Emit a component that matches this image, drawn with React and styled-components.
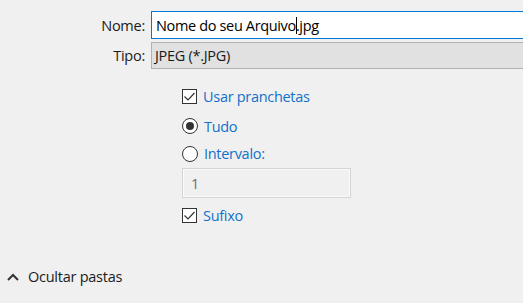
import React from "react";
import styled, { createGlobalStyle } from "styled-components";

const Global = createGlobalStyle`
  html, body { margin: 0; padding: 0; background: #f0f0f0; }
  body { font-family: "Open Sans", "Noto Sans", sans-serif; overflow: hidden; }
`;

const Page = styled.div`
  width: 523px;
  height: 303px;
  background: #f0f0f0;
  display: flex;
  flex-direction: column;
  position: relative;
  overflow: hidden;
`;

const Form = styled.div`
  display: grid;
  grid-template-columns: 145px 380px;
  column-gap: 6px;
  row-gap: 3px;
  padding-top: 11px;
  align-items: center;
`;

const Label = styled.label`
  text-align: right;
  font-size: 14.5px;
  color: #1a1a1a;
  letter-spacing: -0.25px;
`;

const NameField = styled.div`
  height: 28px;
  box-sizing: border-box;
  border: 1px solid #0078d7;
  border-right: none;
  background: #fff;
  display: flex;
  align-items: center;
  padding-left: 4px;
  font-size: 14.5px;
  letter-spacing: -0.35px;
  color: #000;
`;

const Caret = styled.span`
  display: inline-block;
  width: 1px;
  height: 17px;
  background: #000;
  vertical-align: middle;
  margin: 0 -1px 0 0;
`;

const TypeField = styled.div`
  height: 27px;
  box-sizing: border-box;
  border: 1px solid #adb2b5;
  border-right: none;
  background: #e1e1e1;
  display: flex;
  align-items: center;
  padding-left: 3px;
  font-size: 14.5px;
  letter-spacing: -0.3px;
  color: #1a1a1a;
`;

const Options = styled.div`
  display: flex;
  flex-direction: column;
  padding-left: 182px;
  margin-top: 20px;
`;

const OptionRow = styled.div`
  display: flex;
  align-items: center;
  gap: 6px;
  height: ${(p) => p.$h || 28}px;
`;

const OptionText = styled.span`
  font-size: 14.5px;
  color: #1070cc;
  letter-spacing: -0.3px;
`;

const Box = styled.span`
  width: 15px;
  height: 15px;
  box-sizing: border-box;
  border: 1px solid #333;
  background: #fff;
  display: flex;
  align-items: center;
  justify-content: center;
`;

const Radio = styled.span`
  width: 16px;
  height: 16px;
  box-sizing: border-box;
  border: 1px solid #333;
  border-radius: 50%;
  background: #fff;
  display: flex;
  align-items: center;
  justify-content: center;
  &::after {
    content: "";
    display: ${(p) => (p.$on ? "block" : "none")};
    width: 8px;
    height: 8px;
    border-radius: 50%;
    background: #333;
  }
`;

const IntervalInput = styled.div`
  width: 169px;
  height: 30px;
  box-sizing: border-box;
  border: 1px solid #d4d4d4;
  outline: 1px solid #fafafa;
  outline-offset: -2px;
  background: #f0f0f0;
  display: flex;
  align-items: center;
  padding-left: 8px;
  font-size: 14.5px;
  color: #6d6d6d;
  margin: 2px 0 2px;
`;

const Footer = styled.div`
  display: flex;
  align-items: center;
  gap: 9px;
  padding-left: 7px;
  margin-top: 36px;
  font-size: 14.5px;
  color: #1a1a1a;
  letter-spacing: -0.25px;
`;

const Check = () => (
  <svg width="13" height="13" viewBox="0 0 13 13">
    <path d="M1.5 6.5 L5 10 L11.5 3" fill="none" stroke="#333" strokeWidth="1.2" />
  </svg>
);

const Chevron = () => (
  <svg width="12" height="8" viewBox="0 0 12 8">
    <path d="M1 7 L6 2 L11 7" fill="none" stroke="#333" strokeWidth="2" />
  </svg>
);

export default function App() {
  return (
    <Page>
      <Global />
      <Form>
        <Label>Nome:</Label>
        <NameField>
          Nome do seu Arquivo<Caret />.jpg
        </NameField>
        <Label>Tipo:</Label>
        <TypeField>JPEG (*.JPG)</TypeField>
      </Form>
      <Options>
        <OptionRow $h={15}>
          <Box>
            <Check />
          </Box>
          <OptionText>Usar pranchetas</OptionText>
        </OptionRow>
        <OptionRow $h={30} style={{ marginTop: 7 }}>
          <Radio $on />
          <OptionText>Tudo</OptionText>
        </OptionRow>
        <OptionRow $h={25}>
          <Radio />
          <OptionText>Intervalo:</OptionText>
        </OptionRow>
        <IntervalInput>1</IntervalInput>
        <OptionRow $h={31}>
          <Box>
            <Check />
          </Box>
          <OptionText>Sufixo</OptionText>
        </OptionRow>
      </Options>
      <Footer>
        <Chevron />
        <span>Ocultar pastas</span>
      </Footer>
    </Page>
  );
}
